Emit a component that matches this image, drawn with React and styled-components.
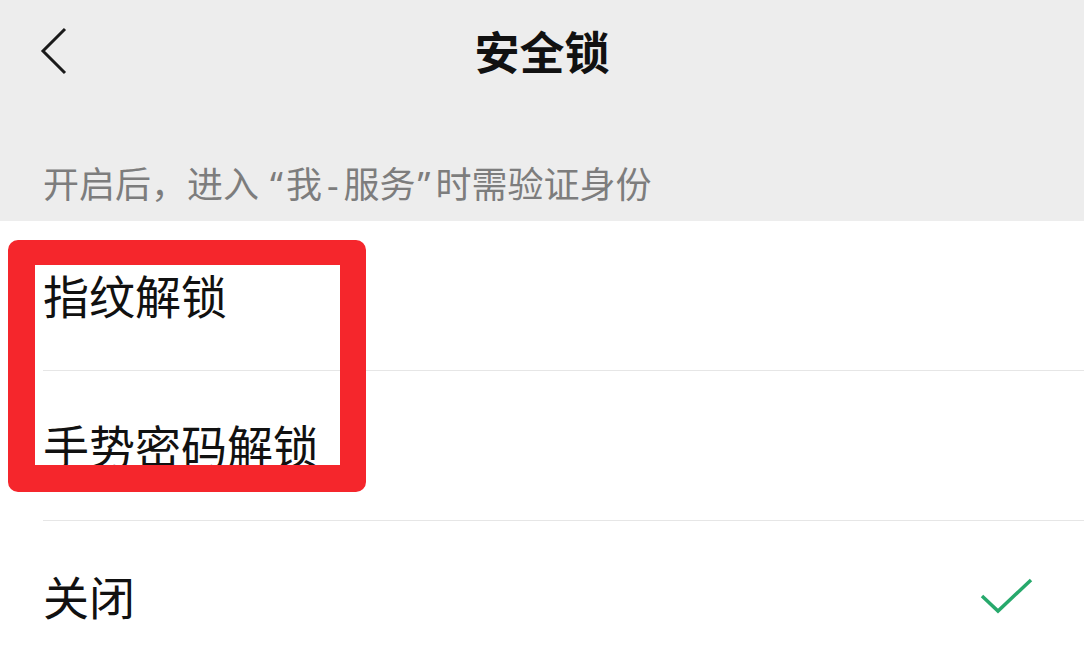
import React from "react";
import styled, { createGlobalStyle } from "styled-components";

const Global = createGlobalStyle`
  html, body { margin: 0; padding: 0; background: #ffffff; }
  body { font-family: "Noto Sans CJK SC", "Noto Sans", sans-serif; }
`;

const Page = styled.div`
  position: relative;
  width: 1084px;
  height: 671px;
  overflow: hidden;
  background: #ffffff;
`;

const Header = styled.header`
  background: #ededed;
  height: 221px;
  display: flex;
  flex-direction: column;
`;

const NavBar = styled.div`
  height: 102px;
  display: grid;
  grid-template-columns: 1fr auto 1fr;
  align-items: center;
`;

const BackButton = styled.button`
  justify-self: start;
  margin-left: 36px;
  padding: 0;
  border: none;
  background: transparent;
  width: 34px;
  height: 50px;
  display: flex;
  align-items: center;
  justify-content: center;
`;

const Title = styled.h1`
  margin: 0;
  font-size: 45px;
  line-height: 52px;
  font-weight: 700;
  color: #111111;
`;

const Hint = styled.div`
  flex: 1;
  display: flex;
  align-items: flex-end;
  padding: 0 0 15px 43px;
  font-family: "Noto Sans", "Noto Sans CJK SC", sans-serif;
  font-size: 36px;
  line-height: 42px;
  color: #7d7d7d;
  white-space: nowrap;
`;

const Punct = styled.span`
  margin-left: ${(p) => p.$l}px;
  margin-right: ${(p) => p.$r}px;
`;

const List = styled.ul`
  list-style: none;
  margin: 0;
  padding: 0;
  background: #ffffff;
`;

const Row = styled.li`
  height: 150px;
  padding-left: 43px;
  box-sizing: border-box;
`;

const RowInner = styled.div`
  height: 100%;
  box-sizing: border-box;
  display: flex;
  align-items: center;
  justify-content: space-between;
  padding-right: 50px;
  border-bottom: ${(p) => (p.$last ? "none" : "1px solid #e6e6e6")};
`;

const Label = styled.span`
  font-size: 46px;
  line-height: 52px;
  margin-top: -3px;
  color: #111111;
`;

const Frame = styled.div`
  position: absolute;
  left: 8px;
  top: 240px;
  width: 358px;
  height: 252px;
  box-sizing: border-box;
  border-style: solid;
  border-color: #f5262c;
  border-width: 25px 26px 27px 27px;
  border-radius: 10px;
  pointer-events: none;
`;

const ChevronLeft = () => (
  <svg width="30" height="48" viewBox="0 0 30 48" fill="none">
    <path d="M27 2 L5 24 L27 46" stroke="#1a1a1a" strokeWidth="3" strokeLinecap="butt" strokeLinejoin="miter" />
  </svg>
);

const Check = () => (
  <svg width="54" height="36" viewBox="0 0 54 36" fill="none">
    <path d="M2 18 L18 33 L51 2" stroke="#27a96c" strokeWidth="3.5" strokeLinejoin="miter" />
  </svg>
);

const options = [
  { label: "指纹解锁" },
  { label: "手势密码解锁" },
  { label: "关闭", checked: true },
];

export default function App() {
  return (
    <>
      <Global />
      <Page>
        <Header>
          <NavBar>
            <BackButton aria-label="返回">
              <ChevronLeft />
            </BackButton>
            <Title>安全锁</Title>
            <span />
          </NavBar>
          <Hint>
            <span>
              开启后，进入<Punct $l={11} $r={3}>“</Punct>我<Punct $l={5} $r={5}>-</Punct>服务
              <Punct $l={2} $r={5}>”</Punct>时需验证身份
            </span>
          </Hint>
        </Header>
        <List>
          {options.map((o, i) => (
            <Row key={o.label}>
              <RowInner $last={i === options.length - 1}>
                <Label>{o.label}</Label>
                {o.checked && <Check />}
              </RowInner>
            </Row>
          ))}
        </List>
        <Frame />
      </Page>
    </>
  );
}
